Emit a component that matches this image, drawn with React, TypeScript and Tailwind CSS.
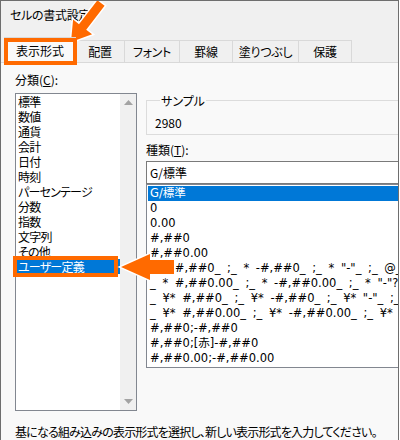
import React from "react";

const categories = ["標準", "数値", "通貨", "会計", "日付", "時刻", "パーセンテージ", "分数", "指数", "文字列", "その他", "ユーザー定義"];

const formats = [
  "G/標準",
  "0",
  "0.00",
  "#,##0",
  "#,##0.00",
  '_ * #,##0_ ;_ * -#,##0_ ;_ * "-"_ ;_ @_ ',
  '_ * #,##0.00_ ;_ * -#,##0.00_ ;_ * "-"??_ ;_ @_ ',
  '_ ¥* #,##0_ ;_ ¥* -#,##0_ ;_ ¥* "-"_ ;_ @_ ',
  '_ ¥* #,##0.00_ ;_ ¥* -#,##0.00_ ;_ ¥* "-"??_ ;_ @_ ',
  "#,##0;-#,##0",
  "#,##0;[赤]-#,##0",
  "#,##0.00;-#,##0.00",
];

const tabs = [
  { label: "配置", w: "w-[49px]" },
  { label: "フォント", w: "w-[55px]" },
  { label: "罫線", w: "w-[53px]" },
  { label: "塗りつぶし", w: "w-[66px]" },
  { label: "保護", w: "w-[53px]" },
];

// block arrow from tip (tx,ty) back to tail (bx,by)
function arrowPoints(tx: number, ty: number, bx: number, by: number, head: number, headHalf: number, shaftHalf: number) {
  const len = Math.hypot(bx - tx, by - ty);
  const ux = (bx - tx) / len, uy = (by - ty) / len;
  const nx = -uy, ny = ux;
  const hx = tx + ux * head, hy = ty + uy * head;
  const p = [
    [tx, ty],
    [hx + nx * headHalf, hy + ny * headHalf],
    [hx + nx * shaftHalf, hy + ny * shaftHalf],
    [bx + nx * shaftHalf, by + ny * shaftHalf],
    [bx - nx * shaftHalf, by - ny * shaftHalf],
    [hx - nx * shaftHalf, hy - ny * shaftHalf],
    [hx - nx * headHalf, hy - ny * headHalf],
  ];
  return p.map(([x, y]) => `${x.toFixed(1)},${y.toFixed(1)}`).join(" ");
}

function ScrollArrow({ up }: { up?: boolean }) {
  return (
    <div className="h-[17px] flex items-center justify-center">
      <svg width="9" height="5" viewBox="0 0 9 5">
        <polygon points={up ? "0,5 4.5,0 9,5" : "0,0 9,0 4.5,5"} fill="#a3a3a3" />
      </svg>
    </div>
  );
}

export default function App() {
  return (
    <div className="relative w-[399px] h-[440px] overflow-hidden bg-[#f0f0f0] border-l border-t border-r border-[#6e6e6e] text-[12px] text-black font-['Noto_Sans_CJK_JP',sans-serif] [font-feature-settings:'palt']">
      <div className="h-[27px] pl-[9px] flex items-center leading-[15px] tracking-[-0.3px]">セルの書式設定</div>

      <div className="mt-[9px] h-[25px] pl-[3px] flex items-end leading-[15px]">
        <div className="relative z-10 w-[72px] h-[26px] -mb-px shrink-0 bg-[#f9f9f9] border-l border-t border-r border-[#d9d9d9] flex items-center justify-center pb-[1px]">
          表示形式
          <div className="absolute -left-[1px] top-0 w-[73px] h-[27px] border-4 border-[#ff6a00]" />
        </div>
        {tabs.map((t) => (
          <div key={t.label} className={`${t.w} shrink-0 h-[22px] border-t border-r border-[#d9d9d9] flex items-center justify-center tracking-[-0.3px]`}>
            {t.label}
          </div>
        ))}
      </div>

      <div className="h-[400px] bg-[#f9f9f9] border-t border-[#d9d9d9] pl-[14px] leading-[15px]">
        <div className="flex items-start">
          <div className="w-[122px] shrink-0">
            <div className="mt-[9px]">
              分類(<span className="underline">C</span>):
            </div>
            <div className="mt-[6px] h-[318px] bg-white border border-[#828790] flex">
              <div className="flex-1 flex flex-col">
                {categories.map((c, i) => {
                  const sel = i === categories.length - 1;
                  return (
                    <div key={c} className={`relative h-[15px] pl-[2px] tracking-[-0.8px] ${sel ? "bg-[#0078d7] text-white" : ""}`}>
                      {c}
                      {sel && <div className="absolute -left-[3px] -top-[3px] w-[105px] h-[21px] border-4 border-[#ff6a00]" />}
                    </div>
                  );
                })}
              </div>
              <div className="w-[16px] bg-[#f0f0f0] flex flex-col justify-between">
                <ScrollArrow up />
                <ScrollArrow />
              </div>
            </div>
          </div>

          <div className="ml-[9px] w-[262px] shrink-0 pt-[30px]">
            <fieldset className="border border-[#dcdcdc] pl-[8px] pt-[7px] pb-[4px]">
              <legend className="ml-[5px] px-[1px]">サンプル</legend>
              <div>2980</div>
            </fieldset>
            <div className="mt-[7px]">
              種類(<span className="underline">T</span>):
            </div>
            <div className="mt-[4px] h-[23px] bg-white border border-[#7a7a7a] pl-[3px] flex items-center">G/標準</div>
            <div className="bg-white border border-[#828790] px-[1px] py-[1px] font-['DejaVu_Sans','Noto_Sans_CJK_JP',sans-serif] text-[11.5px] [word-spacing:3px]">
              {formats.map((f, i) => (
                <div key={i} className={`h-[15px] pl-[2px] whitespace-pre leading-[15px] ${i === 0 ? "bg-[#0078d7] text-white" : ""}`}>
                  {f}
                </div>
              ))}
            </div>
          </div>
        </div>
        <div className="mt-[13px] whitespace-nowrap tracking-[-0.8px]">基になる組み込みの表示形式を選択し、新しい表示形式を入力してください。</div>
      </div>

      <svg className="absolute left-[-1px] top-[-1px] pointer-events-none" width="400" height="440" viewBox="0 0 400 440">
        <polygon points={arrowPoints(71, 42, 101, 3, 19, 12, 4.5)} fill="#ff6a00" stroke="#ffffff" strokeWidth="3" strokeLinejoin="miter" paintOrder="stroke" />
        <polygon points={arrowPoints(121, 267, 174, 267, 29, 13, 7)} fill="#ff6a00" stroke="#ffffff" strokeWidth="3" strokeLinejoin="miter" paintOrder="stroke" />
      </svg>
    </div>
  );
}
